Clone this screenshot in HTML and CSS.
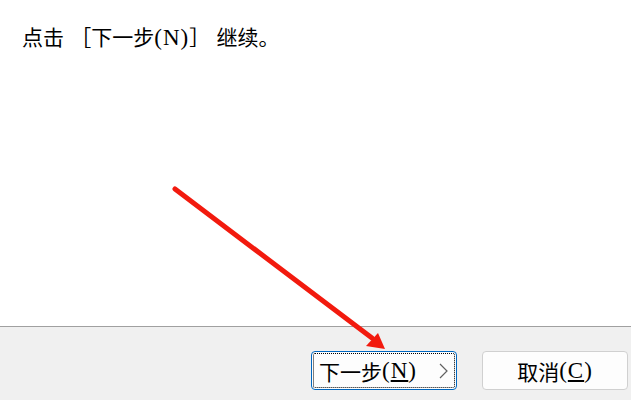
FILE: index.html
```html
<!DOCTYPE html>
<html lang="zh-CN">
<head>
    <meta charset="UTF-8">
    <title>安装向导</title>
    <link rel="stylesheet" href="styles.css">
</head>
<body>

    <div class="wizard">
        <!-- Page body -->
        <div class="wizard-body">
            <p class="line">点击 ［下一步<span class="latin">(N)</span>］ 继续。</p>
        </div>

        <!-- Buttons -->
        <div class="wizard-footer">
            <button class="btn btn-default">
                <span class="focus">下一步<span class="latin">(<u>N</u>)</span>
                    <svg class="chev" width="9" height="16" viewBox="0 0 9 16"><polyline points="1,1 8,8 1,15" fill="none" stroke="#606060" stroke-width="1.2"/></svg>
                </span>
            </button>
            <button class="btn">取消<span class="latin">(<u>C</u>)</span></button>
        </div>

        <!-- Annotation arrow -->
        <svg class="arrow" width="631" height="400" viewBox="0 0 631 400">
            <line x1="175" y1="189" x2="372" y2="338" stroke="#f21a0e" stroke-width="5" stroke-linecap="round"/>
            <polygon points="385,349 366,346 378,333" fill="#f21a0e"/>
        </svg>
    </div>

</body>
</html>
```

FILE: styles.css
```css
body {
    margin: 0;
    font-family: "Liberation Serif", "Noto Sans CJK SC", serif;
    color: #000;
    overflow: hidden;
}
.wizard {
    position: relative;
    width: 631px;
    height: 400px;
    display: flex;
    flex-direction: column;
}
.wizard-body {
    height: 326px;
    background-color: #fff;
    padding: 22px 0 0 22px;
    box-sizing: border-box;
    overflow: hidden;
}
.line {
    margin: 0;
    font-size: 21px;
    line-height: 32px;
    word-spacing: 1px;
}
.latin {
    font-size: 23px;
    letter-spacing: 1px;
}
.wizard-footer {
    flex: 1;
    background-color: #f0f0f0;
    border-top: 1px solid #a0a0a0;
    display: flex;
    justify-content: flex-end;
    align-items: flex-start;
    gap: 25px;
    padding: 24px 3px 0 0;
}
.btn {
    width: 146px;
    height: 39px;
    background-color: #fdfdfd;
    border: 1px solid #d0d0d0;
    border-radius: 4px;
    font-family: "Liberation Serif", "Noto Sans CJK SC", serif;
    font-size: 21px;
    color: #000;
    padding: 0;
    display: flex;
    align-items: center;
    justify-content: center;
}
.btn .latin {
    font-size: 23px;
    letter-spacing: 1px;
}
.btn u {
    text-underline-offset: 2px;
}
.btn-default {
    border: 1px solid #0067c0;
    padding: 1px;
}
.focus {
    flex: 1;
    align-self: stretch;
    display: flex;
    align-items: center;
    padding-left: 5px;
    border: 1px dotted #000;
    border-radius: 2px;
}
.chev {
    margin-left: 22px;
}
.arrow {
    position: absolute;
    left: 0;
    top: 0;
    pointer-events: none;
}
```
